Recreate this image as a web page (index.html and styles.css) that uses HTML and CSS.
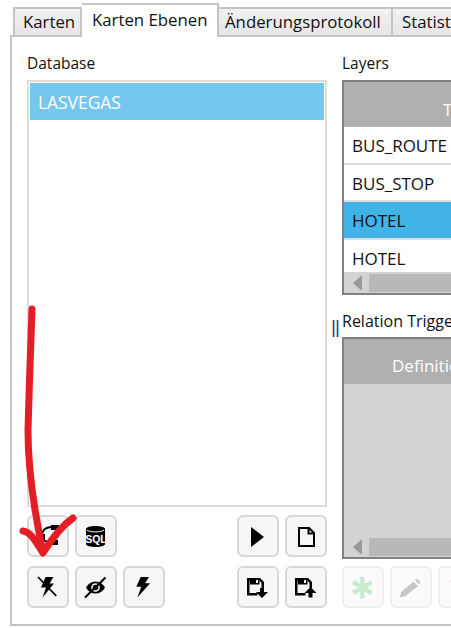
FILE: index.html
```html
<!DOCTYPE html>
<html lang="de">
<head>
  <meta charset="UTF-8">
  <title>Karten Ebenen</title>
  <link rel="stylesheet" href="styles.css">
</head>
<body>

  <div class="tabs">
    <div class="tab tab-first">Karten</div>
    <div class="tab tab-active">Karten Ebenen</div>
    <div class="tab tab-log">Änderungsprotokoll</div>
    <div class="tab tab-stats">Statistiken</div>
  </div>

  <div class="panel">
    <div class="col-left">
      <div class="label">Database</div>
      <div class="db-list">
        <div class="db-item">LASVEGAS</div>
      </div>
      <div class="tools">
        <div class="tool-row">
          <div class="btn-group">
            <button class="btn">
              <svg class="ico" viewBox="2 2 38 38"><path d="M11 19h7v7h-7zM24 10h8v5h-8zM24 25h7v5h-7z"/><path d="M15 19c1-5 5-7 10-7M28 24c-2 3-7 4-12 1" fill="none" stroke="#000" stroke-width="2"/></svg>
            </button>
            <button class="btn">
              <svg class="ico" viewBox="2 2 38 38"><path d="M11 14c0-4 19-4 19 0v15c0 4-19 4-19 0z"/><path d="M12 15c2 2.500 15 2.500 17 0" fill="none" stroke="#fff" stroke-width="1"/></svg>
              <span class="sql">SQL</span>
            </button>
          </div>
          <div class="btn-group">
            <button class="btn">
              <svg class="ico" viewBox="2 2 38 38"><path d="M14 12v20l13-10z"/></svg>
            </button>
            <button class="btn">
              <svg class="ico" viewBox="2 2 38 38"><path d="M14 13h10l5 5v13H14zM23.500 13v5.500H29" fill="none" stroke="#000" stroke-width="2"/></svg>
            </button>
          </div>
        </div>
        <div class="tool-row">
          <div class="btn-group">
            <button class="btn">
              <svg class="ico" viewBox="2 2 38 38"><path d="M18.500 11h8l-4 6.500h4.500L15.500 31.500l3.500-10h-5z"/><path d="M11 11l18.300 19" fill="none" stroke="#000" stroke-width="1.800"/></svg>
            </button>
            <button class="btn">
              <svg class="ico" viewBox="2 2 38 38"><path d="M11 21.500c4-8 15-8 19 0-4 8-15 8-19 0z"/><circle cx="20.500" cy="21.500" r="4.300" fill="#f6f6f6"/><circle cx="20.500" cy="21.500" r="2.800"/><path d="M10 31.500l20.500-20" fill="none" stroke="#000" stroke-width="2"/></svg>
            </button>
            <button class="btn">
              <svg class="ico" viewBox="2 2 38 38"><path d="M17.700 11h8.300l-4 6.300h5.200L14.300 31.500l4-10.800h-5z"/></svg>
            </button>
          </div>
          <div class="btn-group">
            <button class="btn">
              <svg class="ico" viewBox="2 2 38 38"><path d="M10 12h13l4 4v6h-2.500v-5l-2-2.500h-10v12.500h8v2.500H10z"/><path d="M13 12h9.500v6.500H13z"/><path d="M19 14h2v3h-2z" fill="#f6f6f6"/><path d="M23 22h4v4h4l-6 6-6-6h4z"/></svg>
            </button>
            <button class="btn">
              <svg class="ico" viewBox="2 2 38 38"><path d="M10 12h13l4 4v6h-2.500v-5l-2-2.500h-10v12.500h8v2.500H10z"/><path d="M13 12h9.500v6.500H13z"/><path d="M19 14h2v3h-2z" fill="#f6f6f6"/><path d="M25.500 21l6 6h-4v4.500h-4V27h-4z"/></svg>
            </button>
          </div>
        </div>
      </div>
    </div>

    <div class="col-right">
      <div class="label">Layers</div>
      <div class="grid grid-layers">
        <div class="grid-head"><span class="head-text head-t">Table</span></div>
        <div class="grid-rows">
          <div class="grid-row">BUS_ROUTE</div>
          <div class="grid-row">BUS_STOP</div>
          <div class="grid-row grid-row-on">HOTEL</div>
          <div class="grid-row">HOTEL</div>
        </div>
        <div class="hscroll"><i class="arrow"></i><i class="thumb"></i></div>
      </div>
      <div class="label label-rel"><span class="split">||</span>Relation Trigger</div>
      <div class="grid grid-rel">
        <div class="grid-head"><span class="head-text head-def">Definition</span></div>
        <div class="grid-rows grid-empty"></div>
        <div class="hscroll"><i class="arrow"></i><i class="thumb"></i></div>
      </div>
      <div class="btn-group tool-off">
        <button class="btn btn-off">
          <svg class="ico" viewBox="2 2 38 38"><path d="M20.300 11v21.500M11 16.200l18.600 10.800M29.600 16.200 11 27" fill="none" stroke="#cbe8cf" stroke-width="4.500"/></svg>
        </button>
        <button class="btn btn-off">
          <svg class="ico" viewBox="2 2 38 38"><path d="M23.500 15.500l4.500 4.500-13 10.500-5.300 1 1.300-5.500zM25 14l2-1.500 3.500 3.500-1.500 2.500z" fill="#c8c8c8"/></svg>
        </button>
        <button class="btn btn-off">
          <svg class="ico" viewBox="2 2 38 38"><path d="M12.500 14l8 7" fill="none" stroke="#f6d4d4" stroke-width="3"/></svg>
        </button>
      </div>
    </div>
  </div>

  <!-- Roter Pfeil, von Hand draufgemalt -->
  <svg class="scribble" viewBox="0 0 451 628" width="451" height="628">
    <path d="M32 309C31 340 29 390 28 430C28 470 35 515 43 552" />
    <path d="M23 531C31 532 36 542 43 553C51 540 60 527 73 518" />
  </svg>

</body>
</html>
```

FILE: styles.css
```css
html, body {
  margin: 0;
  padding: 0;
  height: 100%;
  background: #fff;
  overflow: hidden;
  font-family: "Open Sans", "Noto Sans", sans-serif;
  font-size: 15.5px;
  color: #111;
}

/* Tabs */
.tabs {
  display: flex;
  align-items: flex-end;
  height: 35px;
  padding-left: 13px;
  box-sizing: border-box;
  white-space: nowrap;
  position: relative;
  z-index: 1;
  font-size: 16.8px;
}
.tab {
  flex: none;
  box-sizing: border-box;
  height: 28px;
  padding: 0 8px;
  line-height: 26px;
  background: linear-gradient(#f1f1f1, #e6e6e6);
  border: 2px solid #c4c4c4;
  border-bottom: 0;
  border-left-width: 0;
  overflow: hidden;
}
.tab-first {
  width: 69px;
  border-left-width: 2px;
}
.tab-active {
  width: 137px;
  height: 34px;
  margin-bottom: -2px;
  line-height: 30px;
  padding: 0 10px;
  background: #fff;
}
.tab-log {
  width: 174px;
  padding: 0 6px;
}
.tab-stats {
  width: 100px;
  padding: 0 9px;
}

/* Panel */
.panel {
  display: flex;
  gap: 15px;
  width: 600px;
  height: 591px;
  margin-left: 10px;
  padding: 15px 0 16px 15px;
  box-sizing: border-box;
  border: 2px solid #c4c4c4;
}
.label {
  height: 28px;
  line-height: 23px;
}
.col-left {
  flex: none;
  width: 300px;
  display: flex;
  flex-direction: column;
}
.col-right {
  flex: none;
  width: 300px;
  display: flex;
  flex-direction: column;
}

/* Database list */
.db-list {
  flex: 1;
  padding: 1px;
  border: 2px solid #dcdcdc;
}
.db-item {
  height: 37px;
  line-height: 38px;
  padding-left: 8px;
  background: #75c7ef;
  color: #fff;
  font-size: 17.4px;
}

/* Toolbars */
.tools {
  display: flex;
  flex-direction: column;
  gap: 9px;
  margin-top: 8px;
}
.tool-row {
  display: flex;
  justify-content: space-between;
}
.btn-group {
  display: flex;
  gap: 6px;
}
.btn {
  position: relative;
  flex: none;
  display: flex;
  align-items: center;
  justify-content: center;
  box-sizing: border-box;
  width: 42px;
  height: 42px;
  padding: 0;
  background: #f6f6f6;
  border: 2px solid #d8d8d8;
  border-radius: 6px;
}
.btn-off {
  background: #fbfbfb;
  border-color: #efefef;
}
.tool-off {
  margin-top: 7px;
}
.ico {
  display: block;
  width: 38px;
  height: 38px;
}
.sql {
  position: absolute;
  left: 0;
  right: 0;
  top: 16px;
  line-height: 12px;
  text-align: center;
  color: #fff;
  font-size: 10.5px;
  font-weight: 700;
}

/* Grids */
.grid {
  display: flex;
  flex-direction: column;
  box-sizing: border-box;
  border: 2px solid #808080;
  border-right: 0;
  font-size: 17px;
}
.grid-layers {
  height: 215px;
}
.grid-rel {
  height: 222px;
}
.grid-head {
  flex: none;
  height: 45px;
  background: #b0b0b0;
  color: #fff;
  position: relative;
}
.head-text {
  position: absolute;
  top: 16px;
  line-height: 24px;
  white-space: nowrap;
}
.head-t {
  left: 99px;
}
.head-def {
  left: 48px;
  top: 15px;
}
.grid-rows {
  flex: 1;
  min-height: 0;
  overflow: hidden;
}
.grid-row {
  box-sizing: border-box;
  height: 37.5px;
  line-height: 37px;
  padding-left: 8px;
  border-bottom: 2px solid #dcdcdc;
  background: #fff;
}
.grid-row-on {
  background: #41b3e6;
}
.grid-empty {
  background: #d3d3d3;
}
.hscroll {
  flex: none;
  display: flex;
  align-items: center;
  height: 21px;
  background: #d3d3d3;
}
.arrow {
  width: 0;
  height: 0;
  margin-left: 9px;
  border-style: solid;
  border-width: 8px 9px 8px 0;
  border-color: transparent #9a9a9a transparent transparent;
}
.thumb {
  flex: 1;
  height: 18px;
  margin-left: 7px;
  background: #b8b8b8;
}
.label-rel {
  display: flex;
  margin-top: 15px;
  height: 27px;
  margin-left: -11px;
  font-size: 16px;
}
.split {
  flex: none;
  width: 11px;
  color: #1f3f7a;
  font-family: "Liberation Sans", sans-serif;
  font-size: 19px;
  letter-spacing: -1px;
  margin-top: 5px;
}

/* Annotation */
.scribble {
  position: absolute;
  left: 0;
  top: 0;
  pointer-events: none;
}
.scribble path {
  fill: none;
  stroke: #e31e24;
  stroke-width: 7;
  stroke-linecap: round;
  stroke-linejoin: round;
}
```
